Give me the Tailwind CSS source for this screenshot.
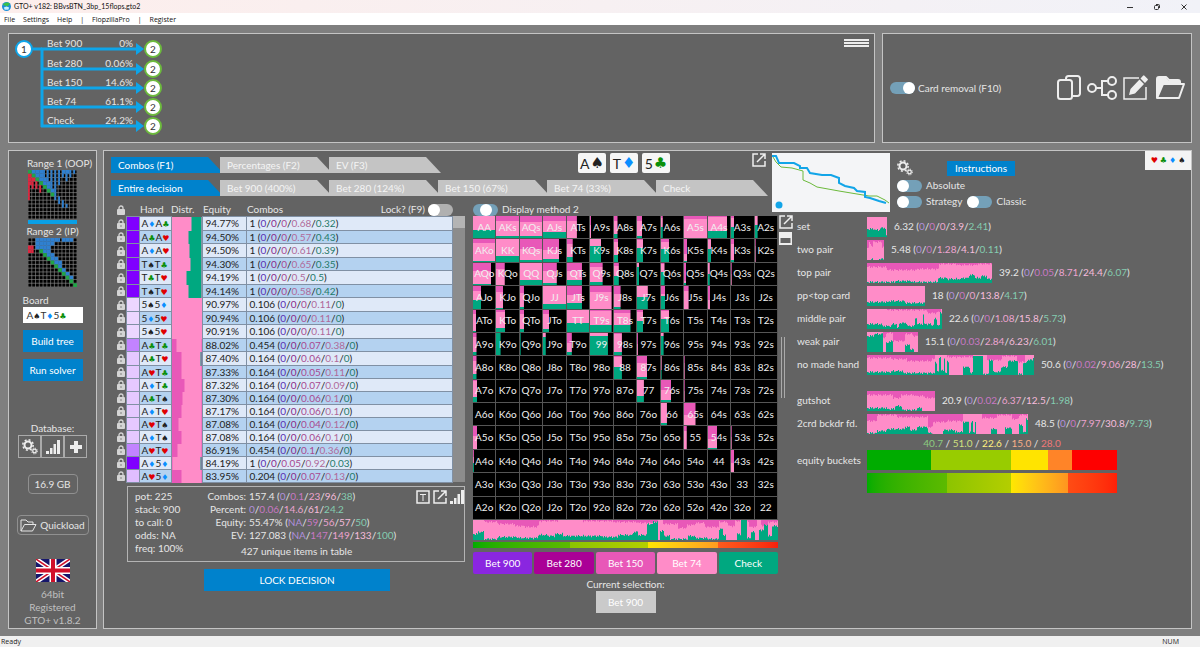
<!DOCTYPE html>
<html lang="en">
<head>
<meta charset="utf-8">
<meta name="viewport" content="width=device-width, initial-scale=1">
<title>GTO+ v182: BBvsBTN_3bp_15flops.gto2</title>
<script src="https://cdn.jsdelivr.net/npm/@tailwindcss/browser@4"></script>
</head>
<body class="flex min-h-screen flex-col bg-[#7f7f7f] font-['Lato','DejaVu_Sans',sans-serif] text-[10px] leading-[13px] text-[#e6e6e6]">

<!-- Title bar -->
<header class="flex h-[13px] items-center bg-linear-to-r from-[#fdeeec] to-[#f1f2f8] px-[2px] text-[7px] text-[#111]">
    <svg class="mr-[3px] size-[9px]" viewBox="0 0 10 10">
        <circle cx="5" cy="5" r="5" fill="#1d8fd8"/>
        <path d="M1 3a5 5 0 0 1 8-1L6 5 3 4z" fill="#3cc04a"/>
        <path d="M2 6l3-1 3 1-1 2.500H3z" fill="#c8f0ff"/>
    </svg>
    <h1>GTO+ v182: BBvsBTN_3bp_15flops.gto2</h1>
    <div class="ml-auto flex items-center gap-[19px] pr-[10px]">
        <button aria-label="Minimize"><svg class="size-2" viewBox="0 0 8 8" stroke="#333" fill="none"><path d="M1 4.500h6"/></svg></button>
        <button aria-label="Restore"><svg class="size-2" viewBox="0 0 8 8" stroke="#333" fill="none"><rect x="1.500" y="2.500" width="4" height="4" rx="1"/><path d="M3 1.500h2.500a1 1 0 0 1 1 1V5"/></svg></button>
        <button aria-label="Close"><svg class="size-2" viewBox="0 0 8 8" stroke="#333" fill="none"><path d="M1.500 1.500l5 5m0-5l-5 5"/></svg></button>
    </div>
</header>

<!-- Menu -->
<nav class="flex h-[12px] items-center bg-white px-1 font-['Open_Sans',sans-serif] text-[7px] text-[#111]">
    <button class="mr-2">File</button>
    <button class="mr-2">Settings</button>
    <button class="mr-2">Help</button>
    <span class="mr-2">|</span>
    <button class="mr-2">FlopzillaPro</button>
    <span class="mr-2">|</span>
    <button>Register</button>
</nav>

<div class="flex flex-1 flex-col gap-[7px] px-2 pt-2 pb-[7px]">

    <!-- Top row -->
    <div class="flex gap-[7px]">
        <section class="flex flex-1 items-start justify-between border border-[#c4c4c4] bg-[#636363] pr-[5px]">
            <svg id="tree" class="h-[108px] w-[160px]" viewBox="0 0 160 108"></svg>
            <button aria-label="Menu" class="mt-[5px] flex flex-col gap-[1px]">
                <span class="h-[2px] w-[25px] bg-[#eee]"></span>
                <span class="h-[2px] w-[25px] bg-[#eee]"></span>
                <span class="h-[2px] w-[25px] bg-[#eee]"></span>
            </button>
        </section>
        <section class="flex w-[310px] items-center border border-[#c4c4c4] bg-[#636363] pr-[6px] pl-[7px]">
            <label class="flex items-center gap-[3px]">
                <input type="checkbox" checked class="flex h-3 w-[25px] appearance-none justify-end rounded-full bg-[#74a0b8] before:size-3 before:rounded-full before:bg-white">
                Card removal (F10)
            </label>
            <div class="ml-auto flex items-center gap-[6px]">
                <button aria-label="Copy"><svg class="h-[26px] w-6" viewBox="0 0 24 26" fill="none" stroke="#eee" stroke-width="2"><path d="M9 5V3.500A2.500 2.500 0 0 1 11.500 1H20.500A2.500 2.500 0 0 1 23 3.500V18.500A2.500 2.500 0 0 1 20.500 21H16"/><rect x="1" y="5" width="14" height="19" rx="2.500"/></svg></button>
                <button aria-label="Tree"><svg class="h-[26px] w-[30px]" viewBox="0 0 30 26" fill="none" stroke="#eee" stroke-width="2"><circle cx="5" cy="13" r="4"/><circle cx="25" cy="6" r="4"/><circle cx="25" cy="20" r="4"/><path d="M9 13h6M21 6h-6v14h6"/></svg></button>
                <button aria-label="Edit"><svg class="h-[26px] w-[26px]" viewBox="0 0 26 26"><path d="M16 3H1v21h22V12" fill="none" stroke="#eee" stroke-width="1.500"/><path d="M6 20l1.500-6L16.500 4.500l4.500 4.500L12 18.500zM17.500 3.500L20 .8a1 1 0 0 1 1.500 0l3 3a1 1 0 0 1 0 1.500L22 8z" fill="#eee"/></svg></button>
                <button aria-label="Open"><svg class="h-[26px] w-[30px]" viewBox="0 0 30 26"><path d="M2 23V4a2 2 0 0 1 2-2h7l3 3h9a2 2 0 0 1 2 2v2M2 23L8 9h21l-5 14z" fill="none" stroke="#eee" stroke-width="2" stroke-linejoin="round"/><path d="M2 23V3h9l3 3h10v3H8z" fill="#eee"/></svg></button>
            </div>
        </section>
    </div>

    <div class="flex flex-1 gap-[6px]">

        <!-- Sidebar -->
        <aside class="flex w-[89px] shrink-0 flex-col items-center border border-[#c4c4c4] bg-[#636363]">
            <h2 class="mt-[6px] ml-[14px] whitespace-nowrap">Range 1 (OOP)</h2>
            <svg id="range1" class="size-[49px]" viewBox="0 0 52 52"></svg>
            <div class="mt-[1px] h-1 w-[49px] bg-[#0aa0e6]"></div>
            <h2 class="mt-[1px]">Range 2 (IP)</h2>
            <svg id="range2" class="size-[49px]" viewBox="0 0 52 52"></svg>
            <div class="mt-[7px] flex w-[60px] flex-col">
                <h2>Board</h2>
                <button id="board" class="h-4 bg-white pl-1 text-left leading-4 text-[#333]"></button>
                <button class="mt-[7px] h-[22px] bg-[#0082cc] text-white">Build tree</button>
                <button class="mt-[7px] h-[22px] bg-[#0082cc] text-white">Run solver</button>
            </div>
            <h2 class="mt-[41px]">Database:</h2>
            <div class="flex">
                <button aria-label="Database settings" class="flex size-[23px] items-center justify-center border border-[#aaa]">
                    <svg class="size-4" viewBox="0 0 16 16" fill="none" stroke="#eee"><circle cx="6" cy="6" r="3.500" stroke-width="2"/><circle cx="6" cy="6" r="5.200" stroke-width="1.500" stroke-dasharray="2 2.080"/><circle cx="12.500" cy="12" r="1.800" stroke-width="1.300"/><circle cx="12.500" cy="12" r="2.900" stroke-dasharray="1.200 1.070"/></svg>
                </button>
                <button aria-label="Statistics" class="flex size-[23px] items-center justify-center border border-[#aaa]">
                    <svg class="size-[14px]" viewBox="0 0 14 14" fill="#eee"><path d="M0 11h3v3H0zM4 8h2.500v6H4zM7.500 4H10v10H7.500zM11 0h3v14h-3z"/></svg>
                </button>
                <button aria-label="Add" class="flex size-[23px] items-center justify-center border border-[#aaa]">
                    <svg class="size-[14px]" viewBox="0 0 14 14" fill="#eee"><path d="M5 1h4v4h4v4H9v4H5V9H1V5h4z"/></svg>
                </button>
            </div>
            <button class="mt-4 h-5 w-[50px] rounded-sm border border-[#909090]">16.9 GB</button>
            <button class="mt-[21px] flex h-5 w-[72px] items-center justify-center gap-[3px] rounded-sm border border-[#909090]">
                <svg class="h-[13px] w-[17px]" viewBox="0 0 17 13" fill="none" stroke="#e6e6e6"><path d="M1 12V1h5l2 2h5v2.500M1 12l3.500-6.500H16L12.500 12z"/></svg>
                Quickload
            </button>
            <svg class="mt-6 h-[23px] w-[34px]" viewBox="0 0 34 23">
                <path fill="#16166b" d="M0 0h34v23H0z"/>
                <path d="M0 0l34 23M34 0L0 23" stroke="#fff" stroke-width="4.500"/>
                <path d="M0 0l34 23M34 0L0 23" stroke="#d0102a" stroke-width="1.500"/>
                <path d="M17 0v23M0 11.500h34" stroke="#fff" stroke-width="7"/>
                <path d="M17 0v23M0 11.500h34" stroke="#d0102a" stroke-width="4"/>
            </svg>
            <p class="mt-[6px] pb-[1px] text-center text-[#c0c0c0]">64bit<br>Registered<br>GTO+ v1.8.2</p>
        </aside>

        <!-- Main -->
        <main class="flex flex-1 border border-[#c4c4c4] bg-[#636363]">

            <div class="flex w-[676px] shrink-0 flex-col gap-[7px] pt-[1px]">
                <div class="flex h-[21px] pl-[7px]">
                    <div id="tabs-view" role="tablist" class="flex items-end"></div>
                    <div id="cards" class="mt-[1px] ml-[140px] flex h-5 gap-1"></div>
                    <button aria-label="Open in window" class="mr-[14px] ml-auto self-start pt-[1px]">
                        <svg class="size-[14px]" viewBox="0 0 14 14" fill="none" stroke="#eee" stroke-width="1.500"><path d="M6 1H1v12h12V8M8 1h5v5M13 1L5 9"/></svg>
                    </button>
                </div>
                <div id="tabs-action" role="tablist" class="flex pl-[7px]"></div>

                <div class="flex gap-2 pl-3">
                    <div class="w-[349px]">
                        <div class="flex h-[13px] items-center">
                            <svg class="ml-[1px] h-[10px] w-2" viewBox="0 0 8 10"><path d="M2 5V3a2 2 0 0 1 4 0v2" fill="none" stroke="#d4d4d4" stroke-width="1.300"/><rect y="4" width="8" height="6" rx="1" fill="#d4d4d4"/></svg>
                            <span class="ml-[15px] w-[31px]">Hand</span>
                            <span class="w-8">Distr.</span>
                            <span class="w-11">Equity</span>
                            <span>Combos</span>
                            <label class="mr-3 ml-auto flex items-center gap-[3px]">
                                Lock? (F9)
                                <input type="checkbox" class="flex h-3 w-[25px] appearance-none rounded-full bg-[#b0b0b0] before:size-3 before:rounded-full before:bg-white">
                            </label>
                        </div>
                        <div class="flex h-[266px]">
                            <table class="w-[337px] table-fixed border-collapse text-[#222]">
                                <colgroup><col class="w-[10px]"><col class="w-[13px]"><col class="w-8"><col class="w-[31px]"><col class="w-11"><col></colgroup>
                                <tbody id="combos"></tbody>
                            </table>
                            <div class="flex-1 bg-[#8c8c8c]"><div class="h-3 bg-[#b4b4b4]"></div></div>
                        </div>
                        <section class="mt-1 ml-[11px] flex h-[76px] border border-[#b4b4b4] pt-[3px] pl-[7px]">
                            <p class="w-[64px]">pot: 225<br>stack: 900<br>to call: 0<br>odds: NA<br>freq: 100%</p>
                            <div class="flex-1">
                                <dl id="summary" class="grid grid-cols-[47px_1fr] gap-x-[3px]"></dl>
                                <p class="pt-[3px] pl-[42px]">427 unique items in table</p>
                            </div>
                            <div class="flex h-[14px] w-[48px] items-center gap-[3px]">
                                <button aria-label="Text view"><svg class="size-[14px]" viewBox="0 0 14 14" fill="none" stroke="#eee"><path d="M1 1h12v12H1z" stroke-width="1.500"/><path d="M4 4.500h6M7 4.500V11"/></svg></button>
                                <button aria-label="Open in window"><svg class="size-[14px]" viewBox="0 0 14 14" fill="none" stroke="#eee" stroke-width="1.500"><path d="M6 1H1v12h12V8M8 1h5v5M13 1L5 9"/></svg></button>
                                <button aria-label="Statistics"><svg class="size-[14px]" viewBox="0 0 14 14" fill="#eee"><path d="M0 11h3v3H0zM4 8h2.500v6H4zM7.500 4H10v10H7.500zM11 0h3v14h-3z"/></svg></button>
                            </div>
                        </section>
                        <button class="mt-[7px] ml-[88px] h-[22px] w-[186px] bg-[#0082cc] text-white">LOCK DECISION</button>
                    </div>

                    <!-- Hand matrix -->
                    <div class="w-[305px]">
                        <label class="flex h-[13px] items-center gap-1">
                            <input type="checkbox" class="flex h-3 w-[25px] appearance-none justify-center rounded-full bg-[#74a0b8] before:size-3 before:rounded-full before:bg-white">
                            Display method 2
                        </label>
                        <div id="matrix" class="grid h-[304px] grid-cols-13 bg-black text-[#f0f0f0]"></div>
                        <svg id="strip" class="h-5 w-full" viewBox="0 0 305 20" preserveAspectRatio="none"></svg>
                        <div class="mt-[2px] flex h-[6px]">
                            <span class="w-[97px] bg-linear-to-r from-[#00ac00] to-[#5cba00]"></span>
                            <span class="w-[78px] bg-linear-to-r from-[#8cc400] to-[#b4ce00]"></span>
                            <span class="w-[70px] bg-linear-to-r from-[#ffe400] to-[#ff9c20]"></span>
                            <span class="flex-1 bg-linear-to-r from-[#ff5a1e] to-[#f81e0c]"></span>
                        </div>
                        <div class="mt-1 grid grid-cols-5 gap-[2px] text-white">
                            <button class="h-[22px] rounded-xs bg-[#8a26e0]">Bet 900</button>
                            <button class="h-[22px] rounded-xs bg-[#aa0096]">Bet 280</button>
                            <button class="h-[22px] rounded-xs bg-[#e858b8]">Bet 150</button>
                            <button class="h-[22px] rounded-xs bg-[#ff8cc8]">Bet 74</button>
                            <button class="h-[22px] rounded-xs bg-[#00a880]">Check</button>
                        </div>
                        <div class="mt-1 flex flex-col items-center">
                            <span>Current selection:</span>
                            <button class="h-[22px] w-[60px] bg-[#cacaca] text-white">Bet 900</button>
                        </div>
                    </div>
                </div>
            </div>

            <!-- Statistics -->
            <div class="flex flex-1 flex-col">
                <div class="flex h-[64px]">
                    <svg class="mt-[2px] -ml-2 h-[59px] w-[118px] shrink-0 bg-[#f4f5f7]" viewBox="0 0 118 59" fill="none">
                        <path d="M1 4l3 5 5 5 11 1 11 3v9l7 3 7 4 11 2 11 2 12 2 12 2 6 1h8l8 4 4 3" stroke="#6cba3c"/>
                        <path d="M0 3h4l3 7h15l6 3v2h7l3 5 12 2h9l8 3v5l6 3 9 2 3 3 8 1v5l5 1 9 3 7 2" stroke="#12a5e8" stroke-width="2"/>
                        <circle cx="7" cy="52" r="3.500" fill="#12a5e8"/>
                    </svg>
                    <div class="flex flex-col gap-[3px] pt-[9px] pl-[7px]">
                        <div class="flex h-4 items-center">
                            <button aria-label="Settings"><svg class="size-4" viewBox="0 0 16 16" fill="none" stroke="#eee"><circle cx="6" cy="6" r="3.500" stroke-width="2"/><circle cx="6" cy="6" r="5.200" stroke-width="1.500" stroke-dasharray="2 2.080"/><circle cx="12.500" cy="12" r="1.800" stroke-width="1.300"/><circle cx="12.500" cy="12" r="2.900" stroke-dasharray="1.200 1.070"/></svg></button>
                            <button class="ml-[34px] h-[15px] w-[68px] bg-[#0082cc] text-white">Instructions</button>
                        </div>
                        <label class="flex items-center gap-1">
                            <input type="checkbox" class="flex h-3 w-[25px] appearance-none rounded-full bg-[#74a0b8] before:size-3 before:rounded-full before:bg-white">
                            Absolute
                        </label>
                        <div class="flex gap-[5px]">
                            <label class="flex items-center gap-1">
                                <input type="checkbox" class="flex h-3 w-[25px] appearance-none rounded-full bg-[#74a0b8] before:size-3 before:rounded-full before:bg-white">
                                Strategy
                            </label>
                            <label class="flex items-center gap-1">
                                <input type="checkbox" class="flex h-3 w-[25px] appearance-none rounded-full bg-[#74a0b8] before:size-3 before:rounded-full before:bg-white">
                                Classic
                            </label>
                        </div>
                    </div>
                    <button aria-label="Suits" class="ml-auto flex h-[19px] w-[46px] items-center justify-center gap-[2px] bg-[#f4f4f4] font-['DejaVu_Sans'] text-[8px]">
                        <span class="text-[#e00000]">♥</span><span class="text-[#0a8f0a]">♣</span><span class="text-[#0a8fff]">♦</span><span class="text-[#222]">♠</span>
                    </button>
                </div>

                <div class="flex">
                    <div class="flex w-[17px] shrink-0 flex-col">
                        <button aria-label="Open in window" class="-ml-[1px]"><svg class="size-[14px]" viewBox="0 0 14 14" fill="none" stroke="#eee" stroke-width="1.500"><path d="M6 1H1v12h12V8M8 1h5v5M13 1L5 9"/></svg></button>
                        <button aria-label="Collapse" class="mt-[3px] -ml-[1px]"><svg class="size-[13px]" viewBox="0 0 13 13"><path d="M0 0h13v13H0z" fill="#eee"/><path d="M1.500 6h10v5h-10z" fill="#636363"/></svg></button>
                        <div class="mt-[92px] ml-[1px] h-[61px] w-[4px] border-x border-[#aaa]"></div>
                    </div>
                    <div class="flex-1">
                        <div id="stats"></div>
                        <p class="h-[15px] w-[320px] pl-[70px] text-center leading-[17px]">
                            <span class="text-[#8ccc80]">40.7</span> / <span class="text-[#d0e080]">51.0</span> / <span class="text-[#fff080]">22.6</span> / <span class="text-[#f8b088]">15.0</span> / <span class="text-[#f07878]">28.0</span>
                        </p>
                        <div class="flex">
                            <span class="w-[70px] leading-5">equity buckets</span>
                            <div class="flex w-[250px] flex-col gap-[3px]">
                                <div class="flex h-5">
                                    <span class="w-[64px] bg-[#00ac00]"></span>
                                    <span class="w-20 bg-[#98cc00]"></span>
                                    <span class="w-[37px] bg-[#ffe400]"></span>
                                    <span class="w-6 bg-[#ff8428]"></span>
                                    <span class="flex-1 bg-[#fe0000]"></span>
                                </div>
                                <div class="flex h-5">
                                    <span class="w-20 bg-linear-to-r from-[#00ac00] to-[#5cba00]"></span>
                                    <span class="w-[64px] bg-linear-to-r from-[#8cc400] to-[#b4ce00]"></span>
                                    <span class="w-[57px] bg-linear-to-r from-[#ffe800] to-[#ff9420]"></span>
                                    <span class="flex-1 bg-linear-to-r from-[#ff4c14] to-[#ff2008]"></span>
                                </div>
                            </div>
                        </div>
                    </div>
                </div>
            </div>
        </main>
    </div>
</div>

<!-- Status bar -->
<footer class="flex h-[11px] items-center justify-between bg-[#f0f0f0] pr-[21px] pl-[1px] font-['Open_Sans',sans-serif] text-[7px] text-[#222]">
    <span>Ready</span>
    <span>NUM</span>
</footer>

<script>
const $ = id => document.getElementById(id);

const suits = {
    s: '<span class="text-[#222]">♠</span>',
    h: '<span class="text-[#e00000]">♥</span>',
    d: '<span class="text-[#0a8fff]">♦</span>',
    c: '<span class="text-[#0a8f0a]">♣</span>',
};
// "AdTc" -> ranks with coloured suit glyphs
const cards = text => text.replace(/(.)([shdc])/g, (m, rank, suit) =>
    rank + `<span class="font-['DejaVu_Sans'] text-[8px] leading-none">${suits[suit]}</span>`);

const dark = ['text-[#5a2fb0]', 'text-[#8a2a8a]', 'text-[#a84a90]', 'text-[#b06a9a]', 'text-[#1f7a6a]'];
const light = ['text-[#b090dc]', 'text-[#c878c4]', 'text-[#eca4d0]', 'text-[#f6bcdc]', 'text-[#84ccb0]'];
const split = (text, palette) => text.split('/').map((v, i) => `<span class="${palette[i]}">${v}</span>`).join('/');

// Decision tree
const branches = [['Bet 900', '0%', 15], ['Bet 280', '0.06%', 35], ['Bet 150', '14.6%', 54], ['Bet 74', '61.1%', 73], ['Check', '24.2%', 92]];
$('tree').innerHTML = '<path d="M24 15h9M33 14v79" stroke="#0ea5e9" stroke-width="3"/>' +
    branches.map(([name, share, y]) => `
        <path d="M32 ${y}h96" stroke="#0ea5e9" stroke-width="3"/>
        <path d="M127 ${y - 6}l8 6-8 6z" fill="#0ea5e9"/>
        <text x="38" y="${y - 2}" fill="#e6e6e6">${name}</text>
        <text x="124" y="${y - 2}" fill="#e6e6e6" text-anchor="end">${share}</text>
        <circle cx="144" cy="${y}" r="8" fill="#fff" stroke="#6cba3c" stroke-width="2"/>
        <text x="144" y="${y + 4}" fill="#333" text-anchor="middle">2</text>`).join('') +
    `<circle cx="15" cy="15" r="8" fill="#fff" stroke="#0ea5e9" stroke-width="2"/>
    <text x="15" y="19" fill="#333" text-anchor="middle">1</text>`;

// Range thumbnails: lower case fills the cell, upper case is a thin bar
const fills = { g: '#22a447', b: '#2f80d0', r: '#dc2840' };
function thumb(id, rows) {
    let out = '<path d="M0 0h52v52H0z"/>';
    for (let i = 0; i <= 13; i++) out += `<path d="M${i * 4} 0v52M0 ${i * 4}h52" stroke="#8a8a8a" stroke-width=".7"/>`;
    rows.forEach((row, y) => [...row].forEach((c, x) => {
        if (c === '.') return;
        const w = c === c.toLowerCase() ? 4 : 2;
        out += `<rect x="${x * 4}" y="${y * 4}" width="${w}" height="4" fill="${fills[c.toLowerCase()]}"/>`;
    }));
    $(id).innerHTML = out;
}
thumb('range1', [
    'gbbbBBBBBbbBB', 'rgbbBBBBBBBB.', 'rrgbbBBBB.B..', 'rRRgbbBBB....', 'RRRRgbBB.....', 'R..R.gbB.....', 'R.....gB.....',
    'R......BB....', '........BB...', '.........BB..', '.............', '.............', '.............']);
thumb('range2', [
    '..bbbbbbBbbb.', '..bbbbb......', 'rRbbbb.......', 'rR.gbb.......', '....gbb......', '.....gbb.....', '......gbb....',
    '.......gb....', '........gb...', '.........gb..', '..........gb.', '...........g.', '............g']);

$('board').innerHTML = cards('AsTd5c');

// Tabs
const tab = (name, active) => `<button role="tab" aria-selected="${active}" class="${active ? 'bg-[#0082cc] text-white' : 'bg-[#c4c4c4] text-[#f4f4f4]'} -mr-[3px] h-4 w-[112px] pl-[7px] text-left [clip-path:polygon(0_0,calc(100%-15px)_0,100%_100%,0_100%)]">${name}</button>`;
$('tabs-view').innerHTML = ['Combos (F1)', 'Percentages (F2)', 'EV (F3)'].map((t, i) => tab(t, i === 0)).join('');
$('tabs-action').innerHTML = ['Entire decision', 'Bet 900 (400%)', 'Bet 280 (124%)', 'Bet 150 (67%)', 'Bet 74 (33%)', 'Check'].map((t, i) => tab(t, i === 0)).join('');

$('cards').innerHTML = [['A', 's'], ['T', 'd'], ['5', 'c']].map(([rank, suit]) =>
    `<div class="flex w-7 items-center justify-center gap-[1px] rounded-xs bg-[#f6f6f6] text-[14px] text-[#222]">${rank}<span class="font-['DejaVu_Sans'] text-[15px]">${suits[suit]}</span></div>`).join('');

// hand, weight, bet 150 %, check %, equity, combos, split
const combos = [
    ['AdAc', 1, 0, 32, '94.77%', '1', '0/0/0/0.68/0.32'],
    ['AcAh', 1, 0, 43, '94.50%', '1', '0/0/0/0.57/0.43'],
    ['AdAh', 1, 0, 39, '94.50%', '1', '0/0/0/0.61/0.39'],
    ['TsTc', 1, 0, 35, '94.30%', '1', '0/0/0/0.65/0.35'],
    ['TcTh', 1, 0, 50, '94.19%', '1', '0/0/0/0.5/0.5'],
    ['TsTh', 1, 0, 42, '94.14%', '1', '0/0/0/0.58/0.42'],
    ['5s5d', .1, 0, 0, '90.97%', '0.106', '0/0/0/0.11/0'],
    ['5d5h', .1, 0, 0, '90.94%', '0.106', '0/0/0/0.11/0'],
    ['5s5h', .1, 0, 0, '90.91%', '0.106', '0/0/0/0.11/0'],
    ['AcTc', .45, 16, 0, '88.02%', '0.454', '0/0/0.07/0.38/0'],
    ['AcTh', .16, 35, 3, '87.40%', '0.164', '0/0/0.06/0.1/0'],
    ['AhTc', .16, 32, 0, '87.33%', '0.164', '0/0/0.05/0.11/0'],
    ['AdTc', .16, 43, 0, '87.32%', '0.164', '0/0/0.07/0.09/0'],
    ['AcTs', .16, 36, 0, '87.30%', '0.164', '0/0/0.06/0.1/0'],
    ['AdTh', .16, 35, 0, '87.17%', '0.164', '0/0/0.06/0.1/0'],
    ['AhTs', .16, 25, 0, '87.08%', '0.164', '0/0/0.04/0.12/0'],
    ['AdTs', .16, 35, 0, '87.08%', '0.164', '0/0/0.06/0.1/0'],
    ['AhTh', .45, 21, 0, '86.91%', '0.454', '0/0/0.1/0.36/0'],
    ['Ad5d', 1, 4, 3, '84.19%', '1', '0/0/0.05/0.92/0.03'],
    ['Ah5d', .2, 34, 0, '83.95%', '0.204', '0/0/0.07/0.13/0'],
];
const bar = (hi, lo, dir) => `linear-gradient(${dir}, #e858b8 ${hi}%, #ff8cc8 ${hi}% ${100 - lo}%, #00a880 ${100 - lo}%)`;
$('combos').innerHTML = combos.map(([hand, weight, hi, lo, equity, total, parts], i) => `
    <tr class="${i < 12 && i % 2 === 0 ? 'h-[14px]' : 'h-[13px]'} ${i % 2 ? 'bg-[#b4d2f0]' : 'bg-[#dfe9f8]'} leading-[11px]">
        <td class="bg-[#636363] p-0"><svg class="ml-[1px] h-[10px] w-2" viewBox="0 0 8 10"><path d="M2 5V3a2 2 0 0 1 4 0v2" fill="none" stroke="#d4d4d4" stroke-width="1.300"/><rect y="4" width="8" height="6" rx="1" fill="#d4d4d4"/><circle cx="4" cy="7" r=".8" fill="#777"/></svg></td>
        <td class="border border-[#8090a4] p-0" style="background:color-mix(in srgb, #8000ff ${weight * 100}%, #f8eeff)"></td>
        <td class="border border-[#8090a4] p-0 pl-[2px] whitespace-nowrap">${cards(hand)}</td>
        <td class="p-0" style="background:${bar(hi, lo, 'to right')}"></td>
        <td class="border border-[#8090a4] p-0 pl-[3px]">${equity}</td>
        <td class="border border-[#8090a4] p-0 pl-[3px]">${total} (${split(parts, dark)})</td>
    </tr>`).join('');

$('summary').innerHTML = [
    ['Combos:', '157.4 (', '0/0.1/23/96/38', ')'],
    ['Percent:', '', '0/0.06/14.6/61/24.2', ''],
    ['Equity:', '55.47% (', 'NA/59/56/57/50', ')'],
    ['EV:', '127.083 (', 'NA/147/149/133/100', ')'],
].map(([name, head, parts, tail]) => `<dt class="text-right">${name}</dt><dd class="whitespace-nowrap">${head}${split(parts, light)}${tail}</dd>`).join('');

// Matrix: width, bet 150 and check share per hand, in percent
const ranks = 'AKQJT98765432';
const mix = {
    AA: [100, 0, 35], AKs: [100, 24, 8], AQs: [100, 27, 8], AJs: [100, 25, 26], ATs: [45, 22, 0], A9s: [6, 40, 0], A8s: [16, 25, 20], A7s: [22, 25, 10], A6s: [8, 10, 50], A5s: [100, 12, 0], A4s: [88, 4, 30], A3s: [15, 10, 50], A2s: [12, 0, 58],
    AKo: [100, 18, 5], KK: [100, 0, 25], KQs: [100, 45, 10], KJs: [70, 47, 15], KTs: [26, 22, 20], K9s: [48, 0, 70], K8s: [20, 15, 30], K7s: [28, 5, 60], K6s: [38, 12, 55], K5s: [15, 65, 5], K4s: [15, 5, 55], K3s: [14, 20, 10], K2s: [3, 30, 0],
    AQo: [84, 38, 5], KQo: [38, 28, 0], QQ: [100, 0, 22], QJs: [60, 35, 10], QTs: [68, 35, 22], Q9s: [55, 18, 12], Q8s: [22, 15, 40], Q7s: [10, 0, 80], Q6s: [16, 5, 60], Q5s: [10, 80, 10], Q4s: [8, 0, 50], Q3s: [3, 50, 0],
    AJo: [38, 20, 38], KJo: [32, 25, 5], QJo: [18, 30, 10], JJ: [100, 0, 20], JTs: [68, 38, 24], J9s: [94, 25, 0], J8s: [30, 35, 10], J7s: [47, 0, 50], J6s: [20, 35, 55], J5s: [20, 20, 0], J4s: [9, 60, 0],
    ATo: [14, 20, 5], KTo: [40, 10, 18], QTo: [20, 20, 12], JTo: [28, 20, 15], TT: [100, 0, 42], T9s: [94, 5, 30], T8s: [75, 15, 32], T7s: [28, 10, 50], T6s: [37, 5, 60],
    A9o: [16, 20, 15], K9o: [20, 0, 100], Q9o: [3, 0, 100], J9o: [12, 0, 80], T9o: [22, 45, 15], 99: [78, 0, 87], '98s': [36, 5, 15], '97s': [4, 50, 0], '96s': [12, 0, 85],
    A8o: [16, 20, 20], 88: [36, 5, 50], '87s': [45, 30, 8], '86s': [3, 0, 40], '85s': [3, 30, 0],
    A7o: [20, 5, 25], 77: [30, 0, 28], '76s': [47, 45, 10], '75s': [3, 50, 0],
    66: [27, 0, 8], '65s': [50, 55, 0], A5o: [20, 45, 0], 55: [12, 20, 0], '54s': [42, 55, 4], '53s': [3, 50, 0],
    A4o: [4, 30, 40], '43s': [15, 60, 0],
};
$('matrix').innerHTML = [...ranks].flatMap((a, y) => [...ranks].map((b, x) => {
    const hand = x === y ? a + b : x > y ? a + b + 's' : b + a + 'o';
    const [w, hi, lo] = mix[hand] || [0, 0, 0];
    return `<div class="flex items-center justify-center border-r border-b border-[#555] bg-no-repeat" style="background-image:${w ? bar(hi, lo, 'to bottom') : 'none'};background-size:${w}% 100%">${hand}</div>`;
})).join('');

// Stepped strategy profile; points are [x, height], with a little noise on top
function area(points, width, top) {
    let d = top ? 'M0 0' : 'M0 20';
    for (let x = 0; x < width; x++) {
        const i = Math.max(0, points.findLastIndex(p => p[0] <= x));
        const h = points[i][1];
        const noise = h > 0 && h < 19 ? Math.sin(x * 2.7) * .7 + Math.sin(x * 5.1) * .5 : 0;
        const y = Math.max(0, Math.min(20, h + noise));
        d += `V${(top ? y : 20 - y).toFixed(1)}h1`;
    }
    return d + (top ? 'V0z' : 'V20z');
}
const profile = (width, hi, lo) => `
    <path d="M0 0h${width}v20H0z" fill="#ff8cc8"/>
    <path d="${area(hi, width, true)}" fill="#e858b8"/>
    <path d="${area(lo, width, false)}" fill="#00a880"/>`;

$('strip').innerHTML = profile(305,
    [[0, 0], [11, 2], [25, 4], [42, 6], [52, 7], [64, 6], [66, 1], [85, 0], [110, 1], [140, 2], [165, 3], [185, 0], [190, 4], [205, 8], [214, 5], [222, 3], [232, 7], [246, 2], [255, 6], [262, 1], [276, 7], [284, 0], [288, 6], [295, 2]],
    [[0, 6], [5, 8], [11, 1], [25, 3], [45, 2], [65, 5], [75, 4], [82, 6], [90, 4], [130, 3], [145, 5], [160, 8], [165, 5], [174, 16], [180, 18], [185, 0], [187, 9], [191, 4], [197, 1], [215, 4], [222, 2], [235, 1], [246, 11], [250, 5], [253, 0], [264, 6], [268, 20], [274, 2], [278, 8], [282, 0], [286, 10], [291, 15], [295, 4], [299, 14]]);

const stats = [
    ['set', 20, '6.32', '0/0/0/3.9/2.41', [[0, 0]], [[0, 8], [8, 7], [13, 9], [19, 1]]],
    ['two pair', 17, '5.48', '0/0/1.28/4.1/0.11', [[0, 8], [2, 3], [4, 6], [6, 2], [15, 7]], [[0, 0], [4, 1], [6, 0], [11, 1]]],
    ['top pair', 125, '39.2', '0/0.05/8.71/24.4/6.07', [[0, 4], [20, 7], [50, 6], [72, 1], [90, 2], [110, 1]], [[0, 1], [28, 2], [45, 1], [71, 5], [80, 4], [95, 5], [102, 8], [108, 5], [114, 7], [120, 4]]],
    ['pp<top card', 58, '18', '0/0/0/13.8/4.17', [[0, 0]], [[0, 4], [22, 5], [38, 3]]],
    ['middle pair', 75, '22.6', '0/0/1.08/15.8/5.73', [[0, 0], [20, 1], [60, 4], [70, 3], [74, 0]], [[0, 5], [15, 3], [25, 5], [30, 1], [32, 6], [40, 3], [48, 11], [50, 5], [56, 14], [57, 5], [64, 4], [67, 10], [70, 4], [73, 16]]],
    ['weak pair', 51, '15.1', '0/0.03/2.84/6.23/6.01', [[0, 0], [16, 6], [19, 1], [26, 9], [38, 2], [46, 4]], [[0, 16], [7, 18], [16, 0], [19, 9], [22, 11], [26, 0], [38, 7], [43, 3], [47, 0]]],
    ['no made hand', 167, '50.6', '0/0.02/9.06/28/13.5', [[0, 3], [25, 4], [40, 6], [65, 4], [68, 0], [80, 2], [106, 0], [120, 5], [135, 1], [150, 7], [158, 0]], [[0, 3], [25, 4], [36, 2], [68, 12], [70, 4], [72, 17], [74, 5], [77, 16], [78, 2], [80, 14], [82, 0], [96, 8], [103, 2], [106, 19], [116, 1], [122, 15], [126, 3], [134, 8], [141, 14], [151, 1], [156, 12], [160, 15], [166, 17]]],
    ['gutshot', 68, '20.9', '0/0.02/6.37/12.5/1.98', [[0, 4], [26, 7], [34, 4], [48, 5], [58, 7]], [[0, 3], [20, 2], [28, 5], [35, 1], [50, 3], [55, 0]]],
    ['2crd bckdr fd.', 161, '48.5', '0/0/7.97/30.8/9.73', [[0, 7], [10, 1], [30, 3], [61, 13], [66, 8], [80, 7], [96, 0], [115, 4], [130, 1], [145, 5], [152, 1]], [[0, 1], [10, 3], [20, 5], [38, 7], [43, 4], [50, 7], [61, 1], [66, 0], [76, 4], [88, 2], [96, 12], [102, 2], [104, 12], [106, 2], [108, 12], [109, 0], [124, 5], [130, 0], [138, 6], [145, 0], [152, 9], [156, 2], [159, 15]]],
];
$('stats').innerHTML = stats.map(([name, width, total, parts, hi, lo]) => `
    <div class="${name === 'gutshot' ? 'mt-[13px]' : ''} flex h-[23px] items-center">
        <span class="w-[70px] whitespace-nowrap">${name.replace('<', '&lt;')}</span>
        <svg class="h-5" style="width:${width}px" viewBox="0 0 ${width} 20">${profile(width, hi, lo)}</svg>
        <span class="pl-[7px]">${total} (${split(parts, light)})</span>
    </div>`).join('');
</script>
</body>
</html>
